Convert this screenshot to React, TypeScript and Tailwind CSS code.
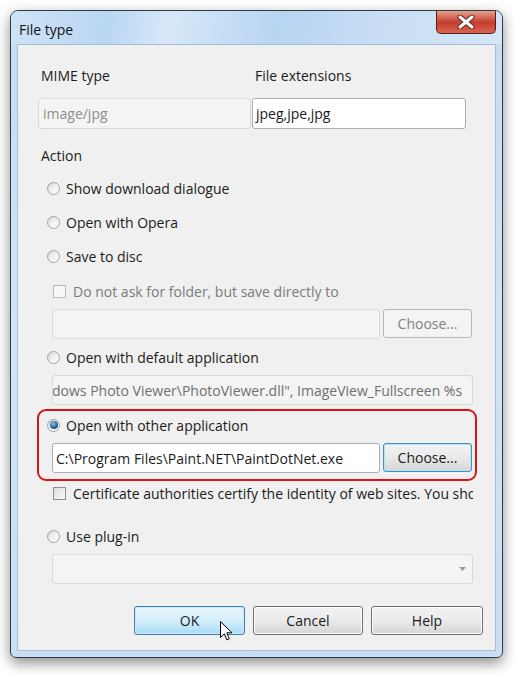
import React from 'react'

const font = "font-['Open_Sans',_'Noto_Sans',_sans-serif]"

function Radio({ checked = false }: { checked?: boolean }) {
  return (
    <span className="w-[13px] h-[13px] rounded-full border border-[#a2a2a2] bg-gradient-to-br from-[#d4d4d4] via-[#f2f2f2] to-[#ffffff] flex items-center justify-center shrink-0">
      {checked && (
        <span className="w-[8px] h-[8px] rounded-full bg-[radial-gradient(circle_at_40%_35%,#8fc4ee,#1b5b95_60%,#0d3a68)]" />
      )}
    </span>
  )
}

function Checkbox({ disabled = false }: { disabled?: boolean }) {
  return (
    <span
      className={
        disabled
          ? 'w-[13px] h-[13px] border border-[#b8b8b8] bg-[#f7f7f7] shrink-0'
          : 'w-[13px] h-[13px] border border-[#8e8f8f] bg-gradient-to-br from-[#dcdcdc] to-[#fbfbfb] shrink-0'
      }
    />
  )
}

function RadioRow({ label, checked }: { label: string; checked?: boolean }) {
  return (
    <div className="h-[34px] flex items-center gap-[6px] pl-[29px]">
      <Radio checked={checked} />
      <span className="text-[#1b1b1b]">{label}</span>
    </div>
  )
}

function Choose({ enabled = false }: { enabled?: boolean }) {
  return (
    <button
      className={
        enabled
          ? 'w-[89px] h-[29px] rounded-[3px] border border-[#3d94c0] bg-gradient-to-b from-[#f3f3f3] via-[#e9e9e9] to-[#d6d6d6] text-[#1b1b1b] shadow-[inset_0_0_0_1px_#b3e2f7]'
          : 'w-[89px] h-[29px] rounded-[3px] border border-[#b5b8ba] bg-[#f4f4f4] text-[#838383]'
      }
    >
      Choose...
    </button>
  )
}

export default function App() {
  return (
    <div className={`w-[521px] h-[676px] bg-white pt-[10px] pl-[10px] ${font} text-[14px]`}>
      <div className="w-[493px] h-[648px] rounded-t-[8px] rounded-b-[6px] border border-[#2f3a45] bg-gradient-to-b from-[#c4dcf3] via-[#d2e4f6] to-[#c9dff4] shadow-[0_5px_14px_rgba(0,0,0,0.45)] flex flex-col overflow-hidden">
        {/* title bar */}
        <div className="h-[33px] flex items-start relative bg-[linear-gradient(100deg,#cfe3f6_0%,#b9d6f2_20%,#d7e8f8_32%,#b7d4f1_55%,#c9def4_75%,#d4e6f7_100%)]">
          <span className="pl-[8px] pt-[10px] text-[#111] text-[14px] leading-[18px]">File type</span>
          <div className="ml-auto mr-[6px] w-[60px] h-[23px] rounded-b-[5px] border border-t-0 border-[#5a1d14] bg-gradient-to-b from-[#e6a08f] via-[#c53d2f] to-[#d9624d] flex items-center justify-center">
            <svg width="18" height="14" viewBox="0 0 18 14">
              <path d="M3 2 L15 12 M15 2 L3 12" stroke="#5a2a22" strokeWidth="5" strokeLinecap="round" />
              <path d="M3 2 L15 12 M15 2 L3 12" stroke="#fff" strokeWidth="3" strokeLinecap="round" />
            </svg>
          </div>
        </div>

        {/* client area */}
        <div className="mx-[6px] h-[607px] bg-[#f0f0f0] border border-[#a7bfd6] flex flex-col">
          <div className="flex mt-[20px] h-[20px] items-center text-[#1b1b1b]">
            <span className="pl-[23px] w-[234px]">MIME type</span>
            <span className="pl-[3px]">File extensions</span>
          </div>
          <div className="flex mt-[13px] pl-[20px] gap-[1px]">
            <div className="w-[213px] h-[31px] rounded-[3px] border border-[#d9d9d9] bg-[#f4f4f4] flex items-center px-[4px] text-[#8d8d8d]">
              image/jpg
            </div>
            <div className="w-[214px] h-[31px] rounded-[3px] border border-[#abadb3] bg-white flex items-center px-[3px] text-[#1b1b1b]">
              jpeg,jpe,jpg
            </div>
          </div>

          <div className="mt-[16px] h-[20px] flex items-center pl-[23px] text-[#1b1b1b]">Action</div>

          <div className="mt-[6px]">
            <RadioRow label="Show download dialogue" />
            <RadioRow label="Open with Opera" />
            <RadioRow label="Save to disc" />
          </div>

          <div className="h-[34px] flex items-center gap-[7px] pl-[35px] mt-[1px] text-[#7b7b7b]">
            <Checkbox disabled />
            <span>Do not ask for folder, but save directly to</span>
          </div>
          <div className="flex pl-[34px] gap-[3px] mt-[1px]">
            <div className="w-[328px] h-[30px] rounded-[3px] border border-[#d9d9d9] bg-[#f4f4f4]" />
            <Choose />
          </div>

          <div className="mt-[1px]">
            <RadioRow label="Open with default application" />
          </div>
          <div className="ml-[34px] w-[421px] h-[30px] mt-[1px] rounded-[3px] border border-[#d9d9d9] bg-[#f4f4f4] overflow-hidden whitespace-nowrap flex items-center text-[#6f6f6f]">
            <span className="ml-[-1px]">dows Photo Viewer\PhotoViewer.dll", ImageView_Fullscreen %s</span>
          </div>

          {/* highlighted option */}
          <div className="ml-[19px] mt-[4px] w-[440px] h-[72px] rounded-[9px] border-2 border-[#d9141b] flex flex-col">
            <div className="h-[28px] flex items-center gap-[6px] pl-[8px]">
              <Radio checked />
              <span className="text-[#1b1b1b]">Open with other application</span>
            </div>
            <div className="flex pl-[13px] gap-[3px] mt-[4px]">
              <div className="w-[328px] h-[30px] rounded-[3px] border border-[#abadb3] bg-white flex items-center px-[3px] text-[#1b1b1b] whitespace-nowrap">
                C:\Program Files\Paint.NET\PaintDotNet.exe
              </div>
              <Choose enabled />
            </div>
          </div>

          <div className="h-[22px] mt-[1px] ml-[35px] w-[420px] flex items-center gap-[7px] overflow-hidden whitespace-nowrap text-[#1b1b1b]">
            <Checkbox />
            <span>Certificate authorities certify the identity of web sites. You should</span>
          </div>

          <div className="mt-[15px]">
            <RadioRow label="Use plug-in" />
          </div>
          <div className="ml-[34px] w-[421px] h-[30px] mt-[1px] rounded-[3px] border border-[#d9d9d9] bg-[#f4f4f4] flex items-center justify-end pr-[6px]">
            <svg width="7" height="4" viewBox="0 0 7 4">
              <path d="M0 0 H7 L3.5 4 Z" fill="#9a9a9a" />
            </svg>
          </div>

          <div className="flex justify-end gap-[8px] pr-[12px] mt-[22px] relative">
            <button className="w-[111px] h-[29px] rounded-[3px] border border-[#3c7fb1] bg-gradient-to-b from-[#e9f6fd] via-[#d4effc] to-[#a9dbf6] text-[#1b1b1b] shadow-[inset_0_0_0_1px_#cdebfb]">
              OK
            </button>
            <button className="w-[110px] h-[29px] rounded-[3px] border border-[#707070] bg-gradient-to-b from-[#f2f2f2] via-[#ebebeb] to-[#d5d5d5] text-[#1b1b1b] shadow-[inset_0_0_0_1px_#fcfcfc]">
              Cancel
            </button>
            <button className="w-[112px] h-[29px] rounded-[3px] border border-[#707070] bg-gradient-to-b from-[#f2f2f2] via-[#ebebeb] to-[#d5d5d5] text-[#1b1b1b] shadow-[inset_0_0_0_1px_#fcfcfc]">
              Help
            </button>
            {/* mouse pointer */}
            <svg className="absolute left-[202px] top-[15px]" width="13" height="20" viewBox="0 0 13 20">
              <path d="M0.5 0.5 V16.5 L4.3 12.8 L6.8 18.8 L9.3 17.8 L6.8 11.8 H12 Z" fill="#fff" stroke="#000" strokeWidth="1" strokeLinejoin="round" />
            </svg>
          </div>
        </div>
      </div>
    </div>
  )
}
